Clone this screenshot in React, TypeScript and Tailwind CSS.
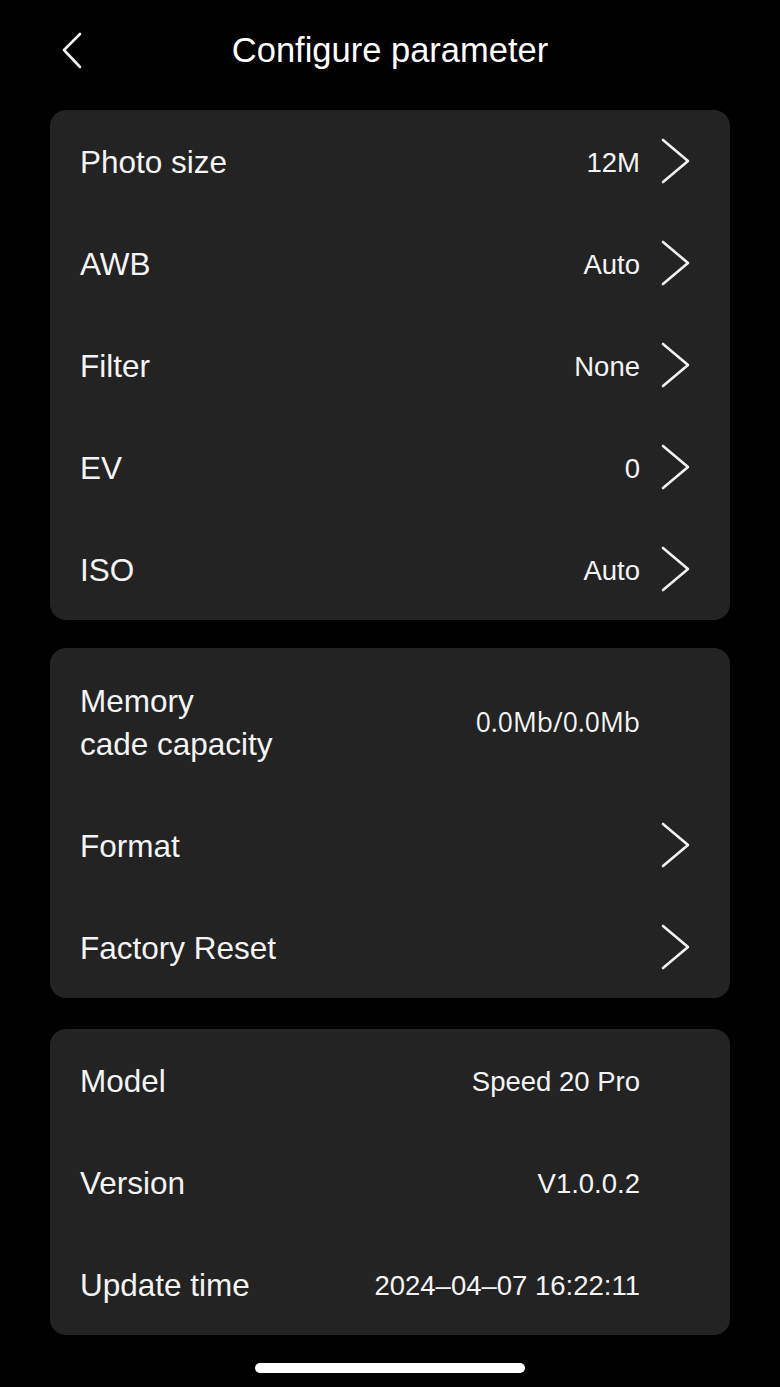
import React from 'react'

const font = { fontFamily: '"Liberation Sans", Arial, sans-serif' }

function Chevron() {
  return (
    <svg width="32" height="46" viewBox="0 0 32 46" className="shrink-0 ml-5 -mt-[3px]">
      <path d="M3 2 L28 23 L3 44" fill="none" stroke="#f2f2f2" strokeWidth="2.6" strokeLinecap="round" strokeLinejoin="round" />
    </svg>
  )
}

function Row({ label, value, arrow = true }: { label: string; value?: string; arrow?: boolean }) {
  return (
    <div className="h-[102px] flex items-center pl-[30px] pr-[38px] pt-[3px]">
      <span className="text-[31.5px] text-[#f4f4f4] flex-1">{label}</span>
      {value && <span className="text-[27.5px] text-[#f4f4f4]">{value}</span>}
      {arrow ? <Chevron /> : <div className="w-[52px] shrink-0" />}
    </div>
  )
}

function Card({ children }: { children: React.ReactNode }) {
  return <div className="bg-[#232323] rounded-[16px] flex flex-col">{children}</div>
}

export default function App() {
  return (
    <div className="w-[780px] h-[1387px] bg-black flex flex-col" style={font}>
      <div className="h-[102px] relative flex items-center justify-center">
        <svg width="24" height="40" viewBox="0 0 24 40" className="absolute left-[60px] top-[31px]">
          <path d="M20 3 L4 19 L20 36" fill="none" stroke="#f2f2f2" strokeWidth="2.6" strokeLinecap="round" strokeLinejoin="round" />
        </svg>
        <span className="text-[34.5px] text-white">Configure parameter</span>
      </div>

      <div className="px-[50px] pt-[8px] flex flex-col gap-[28px]">
        <Card>
          <Row label="Photo size" value="12M" />
          <Row label="AWB" value="Auto" />
          <Row label="Filter" value="None" />
          <Row label="EV" value="0" />
          <Row label="ISO" value="Auto" />
        </Card>

        <Card>
          <div className="h-[146px] flex items-center pl-[30px] pr-[38px] pt-[3px]">
            <span className="text-[31.5px] leading-[43px] text-[#f4f4f4] flex-1">
              Memory
              <br />
              cade capacity
            </span>
            <span className="text-[#f4f4f4]" style={{ fontFamily: '"Open Sans", sans-serif', fontSize: '26.5px' }}>
              0.0Mb/0.0Mb
            </span>
            <div className="w-[52px] shrink-0" />
          </div>
          <Row label="Format" />
          <Row label="Factory Reset" />
        </Card>

        <div className="mt-[3px]">
          <Card>
            <Row label="Model" value="Speed 20 Pro" arrow={false} />
            <Row label="Version" value="V1.0.0.2" arrow={false} />
            <Row label="Update time" value="2024–04–07 16:22:11" arrow={false} />
          </Card>
        </div>
      </div>

      <div className="flex-1 flex items-start justify-center pt-[28px]">
        <div className="w-[270px] h-[10px] rounded-full bg-white" />
      </div>
    </div>
  )
}
